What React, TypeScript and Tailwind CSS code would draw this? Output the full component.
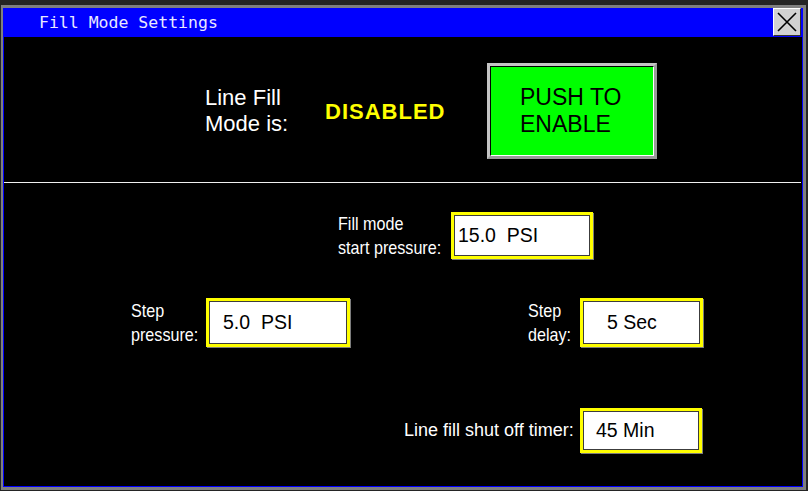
function Field({ className, textClass, children }: { className: string; textClass: string; children: string }) {
    return (
        <div className={`border-[3px] border-[#ffff00] shadow-[1px_1px_0_#7c7c7c] ${className}`}>
            <div className={`flex h-full items-center whitespace-pre border border-[#3c3c3c] bg-white font-['Liberation_Sans',Arial,sans-serif] text-[19.5px] text-black ${textClass}`}>
                {children}
            </div>
        </div>
    )
}

// narrow labels: the panel font is condensed, so squeeze Arial horizontally
function Label({ className, lines }: { className: string; lines: string[] }) {
    return (
        <div className={className}>
            <div className="origin-left scale-x-[0.85] whitespace-nowrap font-['Liberation_Sans',Arial,sans-serif] text-[19px] leading-[24px] text-white">
                {lines[0]}
                <br />
                {lines[1]}
            </div>
        </div>
    )
}

export default function App() {
    return (
        <div className="h-[491px] w-[808px] bg-[#242424] pb-px pl-px pr-[2px] pt-[5px]">
            <div className="flex h-full flex-col border-b-[3px] border-l-2 border-r-[3px] border-t-[3px] border-[#7f7f7f]">
                <div className="flex flex-1 flex-col bg-[#0000ff] px-px pb-px">
                    {/* Title bar */}
                    <div className="flex h-[29px] items-start justify-between">
                        <span className="pl-[35px] pt-[5px] font-['DejaVu_Sans_Mono',monospace] text-[16.5px] leading-[20px] text-[#e8e8ff]">
                            Fill Mode Settings
                        </span>
                        <button className="mr-px h-[28px] w-[28px] border border-b-[#303030] border-l-white border-r-[#303030] border-t-white bg-[#d2d2d2]">
                            <svg width="26" height="26" viewBox="0 0 26 26" className="block">
                                <path d="M4 4 L22 22 M22 4 L4 22" stroke="black" strokeWidth="1.6" />
                            </svg>
                        </button>
                    </div>

                    {/* Content */}
                    <div className="flex-1 bg-black">
                        <div className="flex h-[145px] items-center pt-[3px]">
                            <div className="ml-[201px] w-[120px] font-['Liberation_Sans',Arial,sans-serif] text-[22px] leading-[26px] text-white">
                                Line Fill
                                <br />
                                Mode is:
                            </div>
                            <div className="w-[162px] font-['Liberation_Sans',Arial,sans-serif] text-[22px] font-bold tracking-[1px] text-[#ffff00]">
                                DISABLED
                            </div>
                            <button className="h-[96px] w-[170px] border-[3px] border-b-[#9a9a9a] border-l-[#c4c4c4] border-r-[#9a9a9a] border-t-[#c4c4c4] text-left">
                                <div className="flex h-full items-center border border-b-white border-l-black border-r-white border-t-black bg-[#00ff00] pl-[29px] font-['Liberation_Sans',Arial,sans-serif] text-[23px] leading-[27px] text-black">
                                    PUSH TO
                                    <br />
                                    ENABLE
                                </div>
                            </button>
                        </div>

                        <div className="mr-px h-px bg-[#f0f0f0]" />

                        <div className="pt-[29px]">
                            <div className="flex h-[47px] items-center">
                                <Label className="ml-[334px] w-[113px]" lines={['Fill mode', 'start pressure:']} />
                                <Field className="h-[47px] w-[142px]" textClass="pl-[3px]">15.0  PSI</Field>
                            </div>

                            <div className="mt-[39px] flex h-[49px] items-center">
                                <Label className="ml-[127px] w-[75px]" lines={['Step', 'pressure:']} />
                                <Field className="h-[49px] w-[144px]" textClass="pl-[13px]">5.0  PSI</Field>
                                <Label className="ml-[178px] w-[52px]" lines={['Step', 'delay:']} />
                                <Field className="h-[49px] w-[123px]" textClass="pl-[23px]">5 Sec</Field>
                            </div>

                            <div className="mt-[61px] flex h-[45px] items-center">
                                <div className="ml-[400px] w-[176px] font-['Liberation_Sans',Arial,sans-serif] text-[18px] text-white">
                                    Line fill shut off timer:
                                </div>
                                <Field className="h-[45px] w-[122px]" textClass="pl-[12px]">45 Min</Field>
                            </div>
                        </div>
                    </div>
                </div>
            </div>
        </div>
    )
}
